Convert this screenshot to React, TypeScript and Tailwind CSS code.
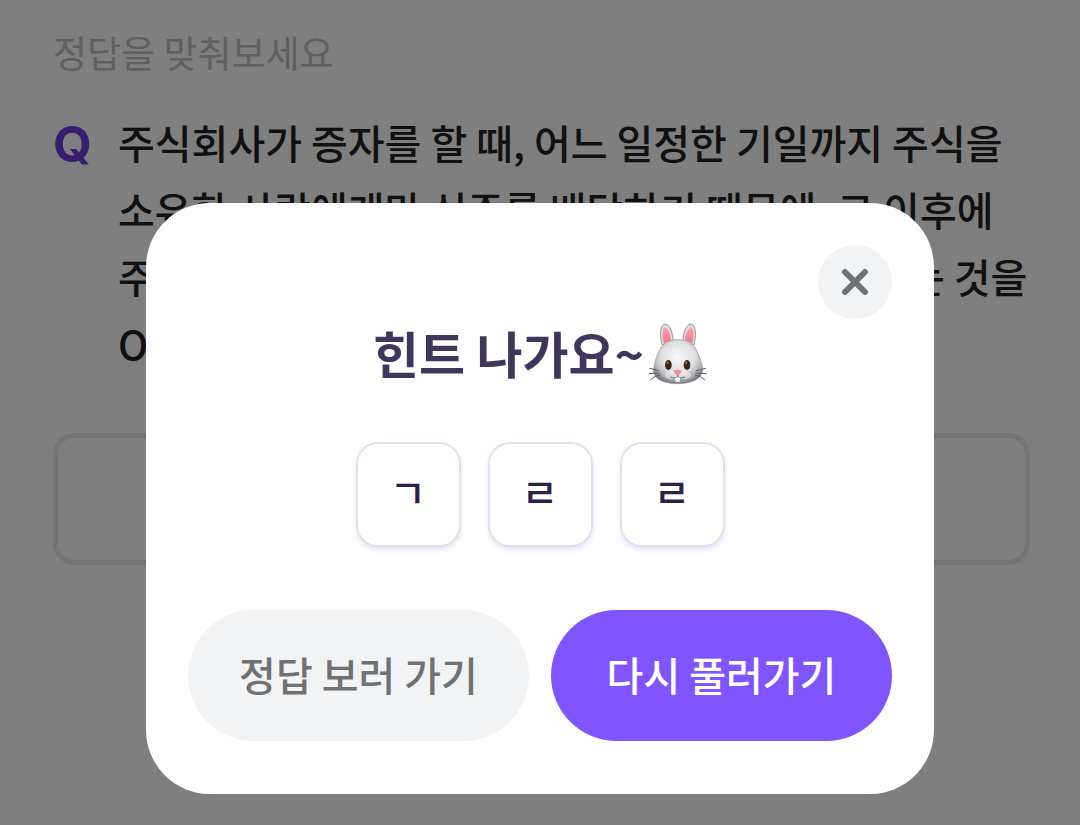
import * as React from "react"
import { useState } from "react"

const hints = ["ㄱ", "ㄹ", "ㄹ"]

const questionLines = [
  "주식회사가 증자를 할 때, 어느 일정한 기일까지 주식을",
  "소유한 사람에게만 신주를 배당하기 때문에, 그 이후에",
  "주식을 산 사람은 신주를 배당받을 권리가 없어지는 것을",
  "OOO라 한다.",
]

function RabbitIcon({ className }: { className?: string }) {
  return (
    <svg viewBox="54 38 177 192" className={className} role="img" aria-label="토끼">
      <defs>
        <radialGradient id="rabbit-face" cx="0.5" cy="0.4" r="0.62">
          <stop offset="0" stopColor="#f8f8fa" />
          <stop offset="0.55" stopColor="#e0e0e3" />
          <stop offset="0.82" stopColor="#b0b0b4" />
          <stop offset="1" stopColor="#6f6f73" />
        </radialGradient>
        <linearGradient id="rabbit-ear" x1="0" y1="0" x2="0" y2="1">
          <stop offset="0" stopColor="#ff9fae" />
          <stop offset="1" stopColor="#f2788c" />
        </linearGradient>
      </defs>

      <g fill="#dededf" stroke="#929295" strokeWidth="3">
        <path d="M96 106C90 80 89 50 103 45C119 41 130 73 129 100Z" />
        <path d="M192 106C198 80 199 50 185 45C169 41 158 73 159 100Z" />
      </g>
      <g fill="url(#rabbit-ear)">
        <path d="M101 100C96 80 96 57 104 55C115 55 124 80 123 97Z" />
        <path d="M187 100C192 80 192 57 184 55C173 55 164 80 165 97Z" />
      </g>

      <path
        d="M143 91C165 91 185 96 198 120C207 138 215 158 218 178C221 204 190 223 143 223C96 223 66 204 71 178C74 158 80 138 90 120C103 96 121 91 143 91Z"
        fill="url(#rabbit-face)"
        stroke="#98989b"
        strokeWidth="2"
      />
      <ellipse cx="126" cy="197" rx="22" ry="13" fill="#f4f4f5" opacity="0.5" />
      <ellipse cx="161" cy="197" rx="22" ry="13" fill="#f4f4f5" opacity="0.5" />

      <g fill="#3a2517">
        <ellipse cx="115" cy="167" rx="10" ry="15" />
        <ellipse cx="171" cy="167" rx="10" ry="15" />
      </g>
      <g fill="#96765a">
        <ellipse cx="113" cy="160" rx="3" ry="4" />
        <ellipse cx="169" cy="160" rx="3" ry="4" />
      </g>

      <g fill="none" stroke="#606064" strokeWidth="3" strokeLinecap="round">
        <path d="M59 177L87 184M57 193L88 191M62 211Q72 200 90 197" />
        <path d="M227 177L199 184M229 193L198 191M224 211Q214 200 196 197" />
        <path d="M143 192V202M122 203Q135 210 143 202Q151 210 164 203" />
      </g>
      <path d="M131 184Q143 178 155 184Q153 194 143 197Q133 194 131 184Z" fill="#f58b98" />
      <path d="M136 206Q143 202 150 206L149 217H137Z" fill="#fff" />
    </svg>
  )
}

function CloseIcon({ className }: { className?: string }) {
  return (
    <svg viewBox="0 0 28 28" className={className} aria-hidden="true">
      <path d="M4 4L24 24M24 4L4 24" stroke="#707173" strokeWidth="6" strokeLinecap="round" />
    </svg>
  )
}

function HintDialog({ onClose }: { onClose: () => void }) {
  return (
    <div className="fixed inset-0 flex items-start justify-center bg-black/50 pt-[203px]">
      <div
        role="dialog"
        aria-modal="true"
        aria-labelledby="hint-title"
        className="flex w-full max-w-[788px] flex-col rounded-[64px] bg-white px-[42px] pt-[42px] pb-[53px]"
      >
        <button
          type="button"
          aria-label="닫기"
          onClick={onClose}
          className="flex size-[74px] items-center justify-center self-end rounded-full bg-[#f2f3f5]"
        >
          <CloseIcon className="size-7" />
        </button>

        <div className="flex h-[70px] items-center justify-center gap-1">
          <h2 id="hint-title" className="pb-1 text-[50px] leading-[66px] font-bold text-[#40365c]">
            힌트 나가요~
          </h2>
          <RabbitIcon className="h-16 w-[59px]" />
        </div>

        <div className="mt-[53px] flex justify-center gap-[27px]">
          {hints.map((hint, i) => (
            <div
              key={i}
              className="flex size-[105px] items-center justify-center rounded-[22px] border-2 border-[#e2dff3] bg-white pb-2 text-[40px] leading-none font-medium text-[#2b2147] shadow-[0_3px_5px_#e4e2f4]"
            >
              {hint}
            </div>
          ))}
        </div>

        <div className="mt-[63px] grid grid-cols-2 gap-[22px] text-[40px] font-medium">
          <button type="button" className="h-[131px] rounded-full bg-[#f2f3f5] pb-1 text-[#707173]">
            정답 보러 가기
          </button>
          <button type="button" onClick={onClose} className="h-[131px] rounded-full bg-[#8055ff] pb-1 text-white">
            다시 풀러가기
          </button>
        </div>
      </div>
    </div>
  )
}

export default function App() {
  const [isOpen, setIsOpen] = useState(true)

  return (
    <main className="min-h-screen overflow-hidden bg-white pt-[22px] pr-[50px] pl-[53px] font-['Noto_Sans_CJK_KR',sans-serif]">
      <label htmlFor="answer" className="block text-[37px] leading-[60px] text-[#bcc0c4]">
        정답을 맞춰보세요
      </label>

      <div className="mt-[27px] flex gap-7 text-[40px] leading-[67px] whitespace-nowrap text-[#222224]">
        <span className="w-[37px] font-['Inter','Noto_Sans_CJK_KR',sans-serif] text-[50px] leading-[71px] font-bold text-[#7341dd]">
          Q
        </span>
        <p className="font-medium">
          {questionLines.map((line) => (
            <span key={line} className="block">
              {line}
            </span>
          ))}
        </p>
      </div>

      <input
        id="answer"
        type="text"
        className="mt-14 block h-[132px] w-full rounded-[22px] border-[5px] border-[#e6e8ea] bg-transparent px-8 text-[40px] outline-none"
      />

      {isOpen && <HintDialog onClose={() => setIsOpen(false)} />}
    </main>
  )
}
